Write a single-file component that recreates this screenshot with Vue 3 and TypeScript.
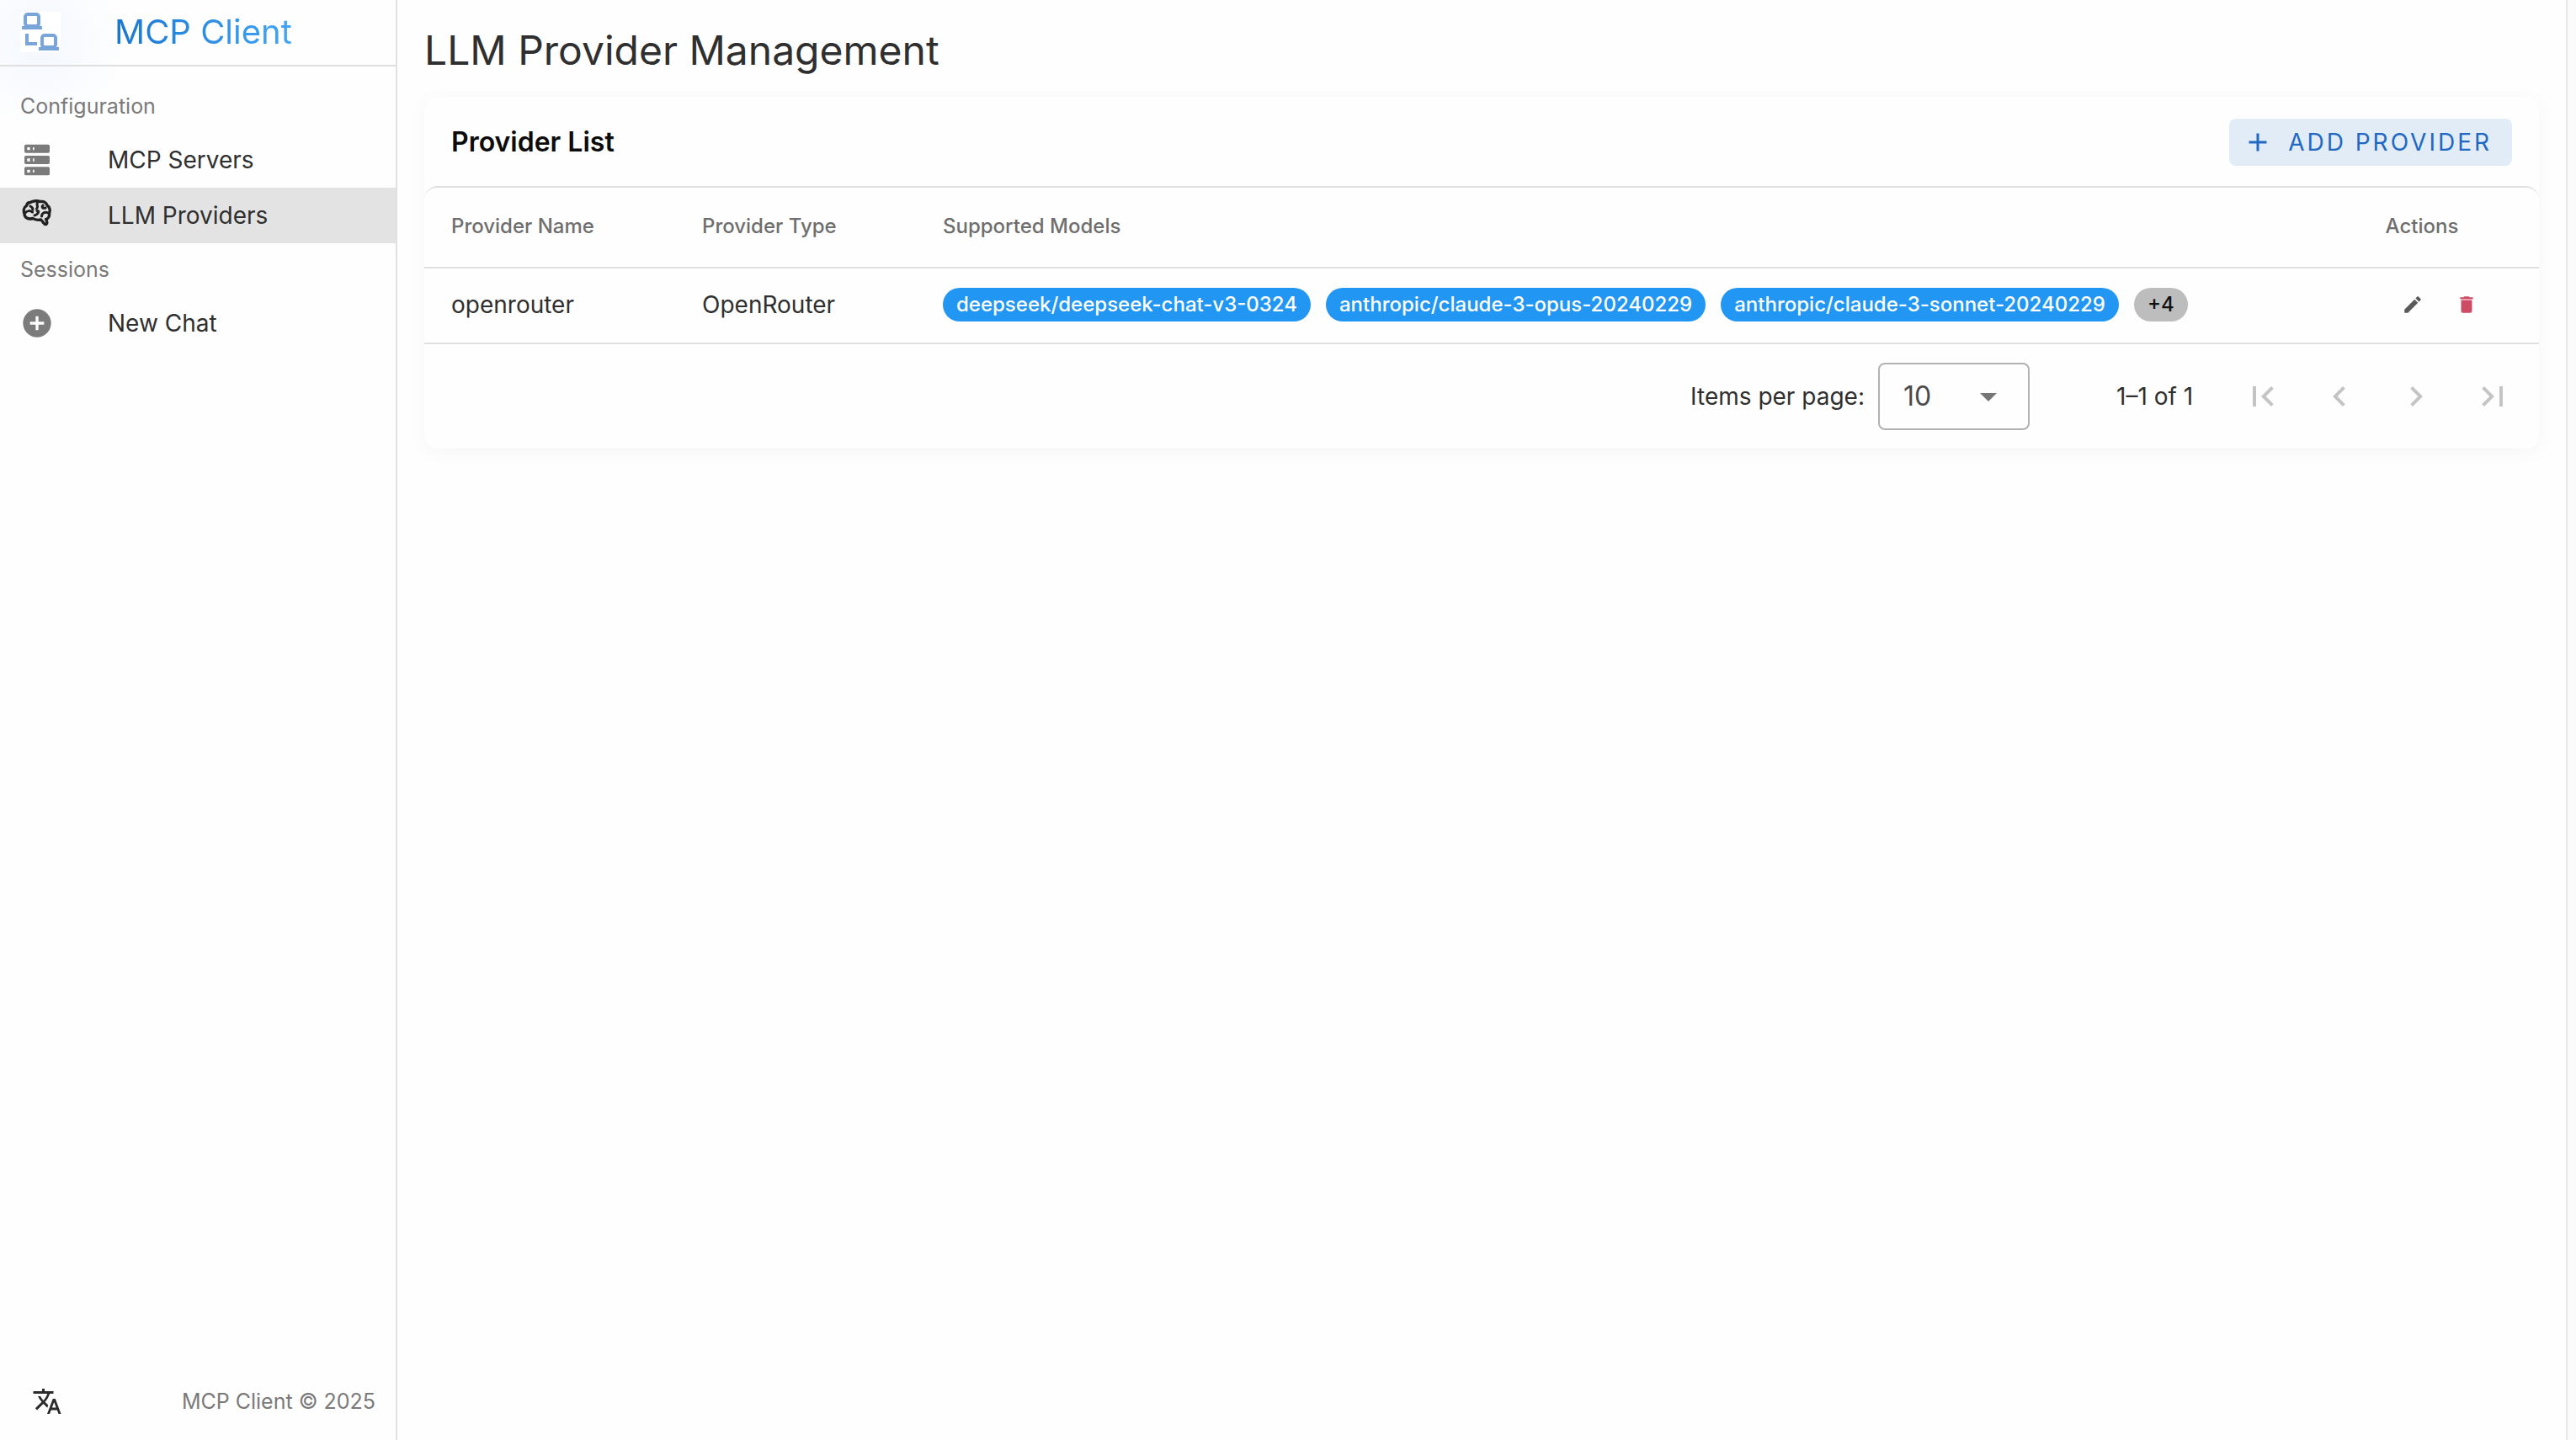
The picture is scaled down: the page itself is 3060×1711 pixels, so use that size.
<script setup lang="ts">
import { ref } from 'vue'

interface NavItem {
  label: string
  icon: 'server' | 'brain' | 'plus'
  active?: boolean
}

interface Provider {
  name: string
  type: string
  models: string[]
  more: number
}

const sections: { title: string; items: NavItem[] }[] = [
  {
    title: 'Configuration',
    items: [
      { label: 'MCP Servers', icon: 'server' },
      { label: 'LLM Providers', icon: 'brain', active: true },
    ],
  },
  { title: 'Sessions', items: [{ label: 'New Chat', icon: 'plus' }] },
]

const providers: Provider[] = [
  {
    name: 'openrouter',
    type: 'OpenRouter',
    models: [
      'deepseek/deepseek-chat-v3-0324',
      'anthropic/claude-3-opus-20240229',
      'anthropic/claude-3-sonnet-20240229',
    ],
    more: 4,
  },
]

const pageSize = ref('10')

const pagers = [
  { label: 'First page', d: 'M18.41,16.59L13.82,12L18.41,7.41L17,6L11,12L17,18L18.41,16.59M6,6H8V18H6V6Z' },
  { label: 'Previous page', d: 'M15.41,16.58L10.83,12L15.41,7.41L14,6L8,12L14,18L15.41,16.58Z' },
  { label: 'Next page', d: 'M8.59,16.58L13.17,12L8.59,7.41L10,6L16,12L10,18L8.59,16.58Z' },
  { label: 'Last page', d: 'M5.59,7.41L10.18,12L5.59,16.59L7,18L13,12L7,6L5.59,7.41M16,6H18V18H16V6Z' },
]
</script>

<template>
  <div class="app">
    <aside class="sidebar">
      <header class="brand">
        <svg class="logo" viewBox="0 0 48 48" aria-hidden="true">
          <path fill="#fff" d="M0 0H48V48H0Z" />
          <g fill="none" stroke="#7aa5d9" stroke-width="4">
            <rect x="6" y="3" width="16" height="14" rx="3" />
            <path d="M2 19H26M8 26V38H20M22 44H46" />
            <rect x="26" y="28" width="16" height="14" rx="3" />
          </g>
        </svg>
        <span class="brand-name">MCP Client</span>
      </header>
      <nav class="nav">
        <section v-for="s in sections" :key="s.title">
          <h2 class="subheader">{{ s.title }}</h2>
          <a v-for="i in s.items" :key="i.label" href="#" class="item" :class="{ active: i.active }">
            <svg v-if="i.icon === 'server'" class="item-icon" viewBox="0 0 24 24" aria-hidden="true">
              <path fill="currentColor" d="M4,1H20A1,1 0 0,1 21,2V6A1,1 0 0,1 20,7H4A1,1 0 0,1 3,6V2A1,1 0 0,1 4,1M4,9H20A1,1 0 0,1 21,10V14A1,1 0 0,1 20,15H4A1,1 0 0,1 3,14V10A1,1 0 0,1 4,9M4,17H20A1,1 0 0,1 21,18V22A1,1 0 0,1 20,23H4A1,1 0 0,1 3,22V18A1,1 0 0,1 4,17M9,5H10V3H9V5M9,13H10V11H9V13M9,21H10V19H9V21M5,3V5H7V3H5M5,11V13H7V11H5M5,19V21H7V19H5Z" />
            </svg>
            <svg v-else-if="i.icon === 'brain'" class="item-icon" viewBox="0 0 40 40" aria-hidden="true">
              <g fill="none" stroke="currentColor" stroke-width="3.4" stroke-linecap="round" stroke-linejoin="round">
                <path d="M12 4.500C15 2.500 21 2 23.500 3.500C28 3 31 5 32 8C35 10 36 14 34.500 17C35 21 33.500 24 30.500 24.500C32 27 32.500 30 30.500 30.500C28 31 28 28 24.500 25C19 26 17 25 15 23.500C9 25 5 22.500 5 18C3.500 14 4.500 10 7.500 8.500C8 6 10 4.500 12 4.500Z" />
                <path d="M6 17C8 14 12 14 14.500 16M12 9C14 10 15 11 15 13M21 4C18 7 22.500 9 19.500 12M20 14.500C23.500 14 21 19 17 20M27 8C25 10.500 27 12 30 11M33 17C29 15 25.500 17.500 25.500 21" stroke-width="3" />
              </g>
            </svg>
            <svg v-else class="item-icon" viewBox="0 0 24 24" aria-hidden="true">
              <path fill="currentColor" d="M17,13H13V17H11V13H7V11H11V7H13V11H17M12,2A10,10 0 0,0 2,12A10,10 0 0,0 12,22A10,10 0 0,0 22,12A10,10 0 0,0 12,2Z" />
            </svg>
            <span>{{ i.label }}</span>
          </a>
        </section>
      </nav>
      <footer class="side-foot">
        <button type="button" class="icon-btn" aria-label="Change language">
          <svg class="lang-icon" viewBox="0 0 24 24" aria-hidden="true">
            <path fill="currentColor" d="M12.87,15.07L10.33,12.56L10.36,12.53C12.1,10.59 13.34,8.36 14.07,6H17V4H10V2H8V4H1V6H12.17C11.5,7.92 10.44,9.75 9,11.35C8.07,10.32 7.3,9.19 6.69,8H4.69C5.42,9.63 6.42,11.17 7.67,12.56L2.58,17.58L4,19L9,14L12.11,17.11L12.87,15.07M18.5,10H16.5L12,22H14L15.12,19H19.87L21,22H23L18.5,10M15.88,17L17.5,12.67L19.12,17H15.88Z" />
          </svg>
        </button>
        <span class="copyright">MCP Client © 2025</span>
      </footer>
    </aside>

    <main class="main">
      <h1 class="title">LLM Provider Management</h1>
      <section class="card">
        <div class="card-head">
          <h2 class="card-title">Provider List</h2>
          <button type="button" class="add">
            <svg class="add-icon" viewBox="0 0 24 24" aria-hidden="true">
              <path fill="currentColor" d="M19,13H13V19H11V13H5V11H11V5H13V11H19V13Z" />
            </svg>
            <span>ADD PROVIDER</span>
          </button>
        </div>
        <div class="table-wrap">
          <table class="table">
            <colgroup>
              <col class="c-name" />
              <col class="c-type" />
              <col />
              <col class="c-act" />
            </colgroup>
            <thead>
              <tr>
                <th scope="col">Provider Name</th>
                <th scope="col">Provider Type</th>
                <th scope="col">Supported Models</th>
                <th scope="col" class="center">Actions</th>
              </tr>
            </thead>
            <tbody>
              <tr v-for="p in providers" :key="p.name">
                <td>{{ p.name }}</td>
                <td>{{ p.type }}</td>
                <td>
                  <div class="chips">
                    <span v-for="m in p.models" :key="m" class="chip">{{ m }}</span>
                    <span class="chip more">+{{ p.more }}</span>
                  </div>
                </td>
                <td>
                  <div class="actions">
                    <button type="button" class="icon-btn edit" aria-label="Edit provider">
                      <svg class="act-icon" viewBox="0 0 24 24" aria-hidden="true">
                        <path fill="currentColor" d="M20.71,7.04C21.1,6.65 21.1,6 20.71,5.63L18.37,3.29C18,2.9 17.35,2.9 16.96,3.29L15.12,5.12L18.87,8.87M3,17.25V21H6.75L17.81,9.93L14.06,6.18L3,17.25Z" />
                      </svg>
                    </button>
                    <button type="button" class="icon-btn delete" aria-label="Delete provider">
                      <svg class="act-icon" viewBox="0 0 24 24" aria-hidden="true">
                        <path fill="currentColor" d="M19,4H15.5L14.5,3H9.5L8.5,4H5V6H19M6,19A2,2 0 0,0 8,21H16A2,2 0 0,0 18,19V7H6V19Z" />
                      </svg>
                    </button>
                  </div>
                </td>
              </tr>
            </tbody>
          </table>
          <div class="pager">
            <label for="page-size">Items per page:</label>
            <div class="select">
              <select id="page-size" v-model="pageSize">
                <option>10</option>
                <option>25</option>
                <option>50</option>
              </select>
              <svg class="caret" viewBox="0 0 24 24" aria-hidden="true">
                <path fill="currentColor" d="M7,10L12,15L17,10H7Z" />
              </svg>
            </div>
            <span class="range">1–1 of 1</span>
            <div class="pages">
              <button v-for="b in pagers" :key="b.label" type="button" class="page-btn" :aria-label="b.label" disabled>
                <svg class="page-icon" viewBox="0 0 24 24" aria-hidden="true">
                  <path fill="currentColor" :d="b.d" />
                </svg>
              </button>
            </div>
          </div>
        </div>
      </section>
    </main>
    <div class="track"></div>
  </div>
</template>

<style>
body {
  background: #fefefe;
}
</style>

<style scoped>
.app {
  display: flex;
  min-height: 100vh;
  font-family: Inter, "Liberation Sans", sans-serif;
  font-size: 28px;
  line-height: 40px;
  color: #2f2f2f;
}
h1,
h2 {
  margin: 0;
  font-weight: 400;
}
button {
  font: inherit;
  border: 0;
  padding: 0;
  background: none;
}
svg {
  display: block;
  flex: none;
}
.sidebar {
  box-sizing: border-box;
  width: 472px;
  flex: none;
  display: flex;
  flex-direction: column;
  border-right: 2px solid #e0e0e0;
  background: radial-gradient(circle at 48px 52px, #f3f8fd 0, #f9fbfe 56px, #fefefe 100px);
}
.brand {
  box-sizing: border-box;
  display: flex;
  align-items: center;
  gap: 64px;
  height: 79px;
  padding: 0 24px 2px;
  border-bottom: 2px solid #e0e0e0;
}
.logo {
  width: 48px;
  height: 48px;
}
.brand-name {
  font-size: 40px;
  line-height: 48px;
  background: linear-gradient(90deg, #1976d2, #42a5f5);
  background-clip: text;
  color: transparent;
}
.nav {
  flex: 1;
  padding-top: 16px;
}
.subheader {
  padding: 0 24px;
  font-size: 25px;
  line-height: 62px;
  color: #7a7a7a;
}
.item {
  display: flex;
  align-items: center;
  gap: 64px;
  height: 66px;
  padding: 0 24px;
  color: inherit;
  text-decoration: none;
}
.item.active {
  background: #e3e3e3;
}
.item-icon {
  width: 40px;
  height: 40px;
  color: #7b7b7b;
}
.active .item-icon {
  color: #222;
}
.side-foot {
  display: flex;
  align-items: center;
  justify-content: space-between;
  padding: 0 24px 22px 38px;
  height: 48px;
}
.icon-btn {
  color: #2b2b2b;
}
.lang-icon {
  width: 36px;
  height: 36px;
}
.copyright {
  font-size: 25px;
  color: #7a7a7a;
}
.main {
  flex: 1;
  min-width: 0;
  padding: 28px 32px 32px;
}
.title {
  font-size: 48px;
  line-height: 64px;
}
.card {
  margin-top: 23px;
  border-radius: 16px;
  background: #fefefe;
  box-shadow: 0 4px 24px rgba(0, 0, 0, 0.04);
}
.card-head {
  box-sizing: border-box;
  display: flex;
  align-items: center;
  justify-content: space-between;
  height: 106px;
  padding: 2px 32px 0;
}
.card-title {
  font-size: 32px;
  font-weight: 600;
  color: #0c0c0c;
}
.add {
  display: flex;
  align-items: center;
  gap: 18px;
  height: 56px;
  padding: 0 24px 0 16px;
  border-radius: 8px;
  background: #e2ecf7;
  color: #2068c2;
  letter-spacing: 3px;
}
.add-icon {
  width: 36px;
  height: 36px;
}
.table-wrap {
  border-top: 2px solid #e0e0e0;
  border-radius: 16px;
}
.table {
  width: 100%;
  border-collapse: separate;
  border-spacing: 0;
  table-layout: fixed;
}
.c-name {
  width: 298px;
}
.c-type {
  width: 286px;
}
.c-act {
  width: 278px;
}
th,
td {
  box-sizing: border-box;
  padding: 0 32px 2px;
  border-bottom: 2px solid #e0e0e0;
  text-align: left;
}
th {
  height: 96px;
  font-size: 24px;
  font-weight: 500;
  color: #6e6e6e;
}
th.center {
  text-align: center;
}
td {
  height: 90px;
}
.chips {
  display: flex;
  gap: 18px;
}
.chip {
  padding: 0 16px;
  border-radius: 20px;
  background: #2196f3;
  color: #fff;
  font-size: 24px;
  font-weight: 500;
  white-space: nowrap;
}
.chip.more {
  background: #bdbdbd;
  color: #111;
}
.actions {
  display: flex;
  justify-content: center;
  gap: 38px;
  padding-left: 42px;
}
.act-icon {
  width: 26px;
  height: 26px;
}
.edit {
  color: #5a5a5a;
}
.delete {
  color: #cb4c64;
}
.pager {
  display: flex;
  align-items: center;
  justify-content: flex-end;
  height: 124px;
  padding-right: 10px;
}
.select {
  position: relative;
  width: 180px;
  margin: 0 103px 0 16px;
}
select {
  box-sizing: border-box;
  display: block;
  width: 100%;
  height: 80px;
  padding: 0 28px;
  border: 2px solid #b2b2b2;
  border-radius: 8px;
  background: none;
  appearance: none;
  font: inherit;
  font-size: 32px;
  color: #4a4a4a;
}
.caret {
  position: absolute;
  right: 25px;
  top: 16px;
  width: 48px;
  height: 48px;
  color: #767676;
  pointer-events: none;
}
.range {
  min-width: 96px;
}
.pages {
  display: flex;
  margin-left: 32px;
}
.page-btn {
  display: flex;
  justify-content: center;
  width: 91px;
  color: #c4c4c4;
}
.page-icon {
  width: 48px;
  height: 48px;
}
.track {
  width: 10px;
  flex: none;
  border-left: 2px solid #e8e8e8;
  background: #fafafa;
}
</style>
